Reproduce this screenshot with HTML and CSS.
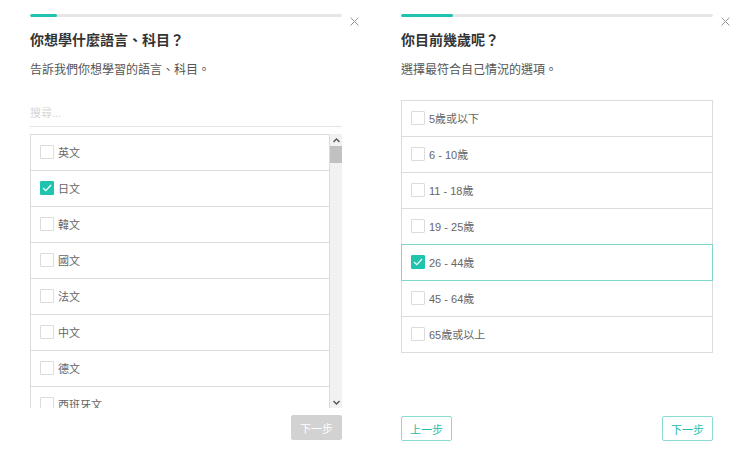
FILE: index.html
```html
<!DOCTYPE html>
<html lang="zh-Hant">
<head>
<meta charset="utf-8">
<link rel="stylesheet" href="styles.css">
</head>
<body>
<div class="page">
  <section class="panel">
    <div class="top">
      <div class="progress"><div class="fill fill-left"></div></div>
      <button class="close" aria-label="close"><svg width="9" height="9" viewBox="0 0 9 9"><path d="M0.5 0.5L8.5 8.5M8.5 0.5L0.5 8.5" stroke="#999" stroke-width="1" fill="none"/></svg></button>
    </div>
    <h2 class="title">你想學什麼語言、科目？</h2>
    <p class="sub">告訴我們你想學習的語言、科目。</p>
    <div class="search">搜尋...</div>
    <div class="listwrap">
      <div class="list scroll">
        <div class="row"><span class="cb"></span>英文</div>
        <div class="row"><span class="cb on"><svg width="10" height="8" viewBox="0 0 10 8"><path d="M1 4L3.8 6.6L9 1" stroke="#fff" stroke-width="1.2" fill="none"/></svg></span>日文</div>
        <div class="row"><span class="cb"></span>韓文</div>
        <div class="row"><span class="cb"></span>國文</div>
        <div class="row"><span class="cb"></span>法文</div>
        <div class="row"><span class="cb"></span>中文</div>
        <div class="row"><span class="cb"></span>德文</div>
        <div class="row"><span class="cb"></span>西班牙文</div>
      </div>
      <div class="sbar">
        <div class="arrow"><svg width="7" height="5" viewBox="0 0 7 5"><path d="M0.5 4L3.5 1L6.5 4" stroke="#555" stroke-width="1.4" fill="none"/></svg></div>
        <div class="thumb"></div>
        <div class="track"></div>
        <div class="arrow"><svg width="7" height="5" viewBox="0 0 7 5"><path d="M0.5 1L3.5 4L6.5 1" stroke="#555" stroke-width="1.4" fill="none"/></svg></div>
      </div>
    </div>
    <div class="actions end">
      <button class="btn disabled">下一步</button>
    </div>
  </section>
  <section class="panel right">
    <div class="top">
      <div class="progress"><div class="fill fill-right"></div></div>
      <button class="close" aria-label="close"><svg width="9" height="9" viewBox="0 0 9 9"><path d="M0.5 0.5L8.5 8.5M8.5 0.5L0.5 8.5" stroke="#999" stroke-width="1" fill="none"/></svg></button>
    </div>
    <h2 class="title">你目前幾歲呢？</h2>
    <p class="sub">選擇最符合自己情況的選項。</p>
    <div class="list ages">
      <div class="row"><span class="cb"></span>5歲或以下</div>
      <div class="row"><span class="cb"></span>6 - 10歲</div>
      <div class="row"><span class="cb"></span>11 - 18歲</div>
      <div class="row"><span class="cb"></span>19 - 25歲</div>
      <div class="row sel"><span class="cb on"><svg width="10" height="8" viewBox="0 0 10 8"><path d="M1 4L3.8 6.6L9 1" stroke="#fff" stroke-width="1.2" fill="none"/></svg></span>26 - 44歲</div>
      <div class="row"><span class="cb"></span>45 - 64歲</div>
      <div class="row"><span class="cb"></span>65歲或以上</div>
    </div>
    <div class="actions between">
      <button class="btn outline">上一步</button>
      <button class="btn outline">下一步</button>
    </div>
  </section>
</div>
</body>
</html>
```
FILE: styles.css
```css
* { box-sizing: border-box; }
html, body { margin: 0; padding: 0; background: #fff; }
body {
  font-family: "Liberation Sans", "Noto Sans CJK TC", sans-serif;
  width: 740px;
  height: 470px;
  overflow: hidden;
}
.page { display: flex; }
.panel {
  width: 370px;
  height: 470px;
  padding: 13px 28px 0 30px;
  display: flex;
  flex-direction: column;
}
.panel.right { padding-left: 31px; padding-right: 27px; }
.top { position: relative; height: 4px; }
.progress {
  height: 3px;
  background: #e6e6e6;
  border-radius: 2px;
  overflow: hidden;
  margin-top: 1px;
}
.fill { height: 3px; background: #1fc3ae; border-radius: 2px; }
.fill-left { width: 27px; }
.fill-right { width: 52px; }
.close {
  position: absolute;
  right: -17px;
  top: 4px;
  border: 0;
  background: none;
  padding: 0;
  width: 9px;
  height: 9px;
  display: block;
}
.close svg { display: block; }
.title {
  margin: 12px 0 0;
  font-size: 14px;
  line-height: 20px;
  font-weight: bold;
  color: #333;
  font-family: "Noto Sans CJK TC", sans-serif;
}
.sub {
  margin: 13px 0 0;
  font-size: 12px;
  line-height: 16px;
  color: #555;
}
.search {
  margin-top: 27px;
  font-size: 11px;
  line-height: 16px;
  color: #d6d6d6;
  padding-bottom: 5px;
  border-bottom: 1px solid #e3e3e3;
}
.listwrap {
  margin-top: 7px;
  display: flex;
  height: 274px;
}
.list { display: flex; flex-direction: column; }
.scroll { flex: 1; overflow: hidden; }
.row {
  flex: none;
  height: 37px;
  border: 1px solid #dcdcdc;
  margin-top: -1px;
  display: flex;
  align-items: center;
  padding-left: 9px;
  padding-bottom: 2px;
  font-size: 11px;
  color: #666;
  background: #fff;
  position: relative;
}
.row:first-child { margin-top: 0; }
.row.sel { border-color: #7fd6cb; z-index: 1; }
.cb {
  width: 14px;
  height: 14px;
  border: 1px solid #dcdcdc;
  border-radius: 1px;
  margin-right: 4px;
  display: flex;
  align-items: center;
  justify-content: center;
  flex: none;
}
.cb.on { background: #1fc3ae; border-color: #1fc3ae; }
.cb svg { display: block; }
.sbar {
  width: 12px;
  display: flex;
  flex-direction: column;
  background: #f1f1f1;
}
.arrow {
  height: 12px;
  display: flex;
  align-items: center;
  justify-content: center;
  flex: none;
}
.thumb { height: 17px; background: #c1c1c1; flex: none; }
.track { flex: 1; }
.ages { margin-top: 22px; }
.actions { display: flex; margin-top: 7px; }
.right .actions { margin-top: 63px; }
.actions.end { justify-content: flex-end; }
.actions.between { justify-content: space-between; }
.btn {
  width: 51px;
  height: 25px;
  font-size: 11px;
  font-family: "Liberation Sans", "Noto Sans CJK TC", sans-serif;
  border-radius: 2px;
  padding: 0;
  cursor: pointer;
}
.btn.disabled { background: #d2d2d2; border: 1px solid #d2d2d2; color: #fff; }
.btn.outline { background: #fff; border: 1px solid #88dcd1; color: #22bfac; }
```
